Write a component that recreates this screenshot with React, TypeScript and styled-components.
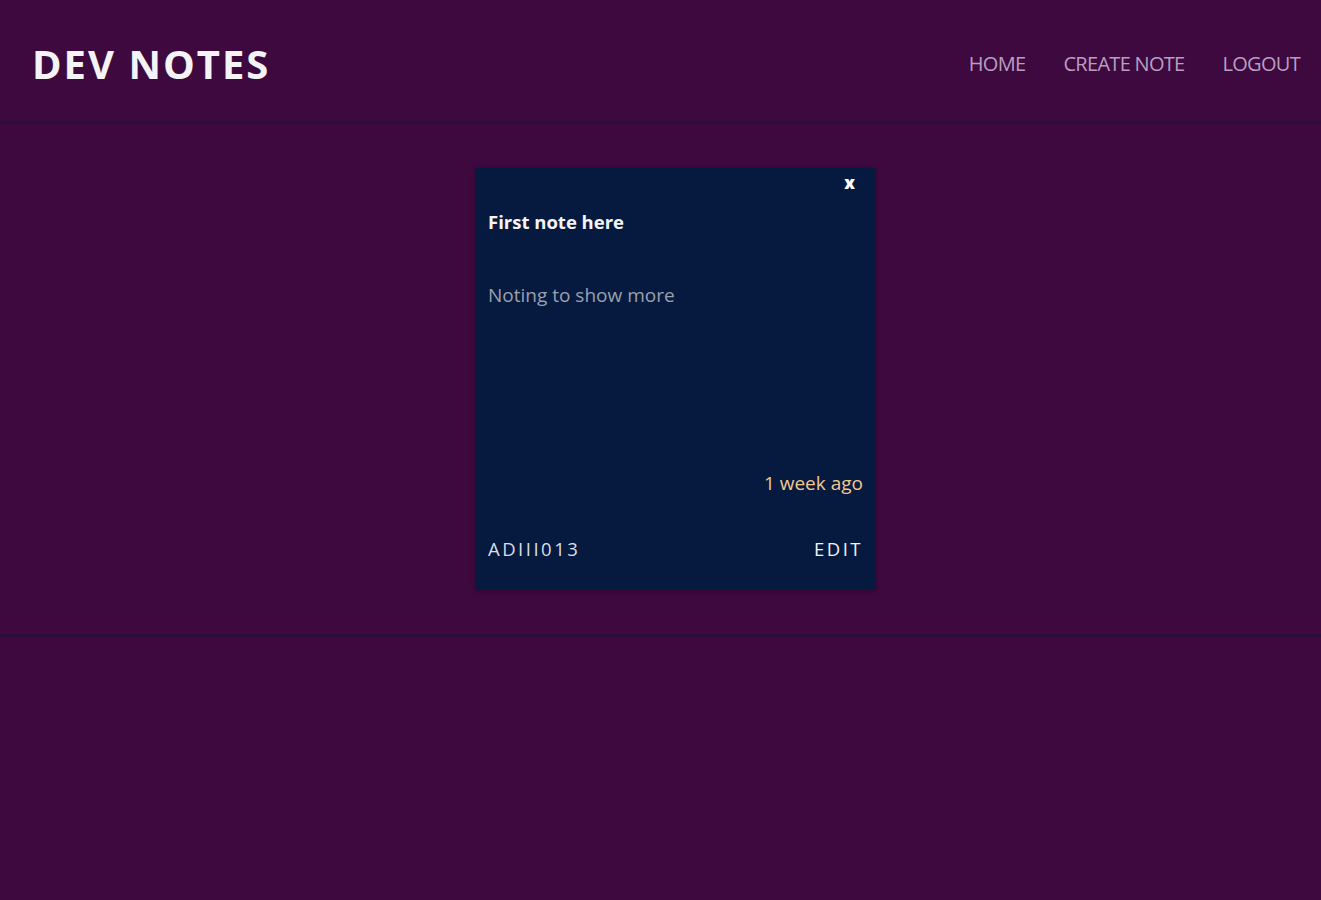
import styled, { createGlobalStyle } from "styled-components";

const COLORS = {
  page: "#3e093e",
  line: "#2b0f3b",
  card: "#061a40",
  nav: "#b99ec0",
  title: "#f4f4f6",
  muted: "#9aa0ae",
  time: "#f1c98e",
  footer: "#dcdde3",
};

type NoteType = {
  title: string;
  body: string;
  time: string;
  author: string;
};

const notes: NoteType[] = [
  {
    title: "First note here",
    body: "Noting to show more",
    time: "1 week ago",
    author: "ADIII013",
  },
];

const GlobalStyle = createGlobalStyle`
  html, body {
    margin: 0;
    background: ${COLORS.page};
    font-family: "Open Sans", "Noto Sans", sans-serif;
  }
  * {
    box-sizing: border-box;
  }
`;

const App = () => {
  return (
    <>
      <GlobalStyle />
      <Page>
        <Header>
          <Logo>DEV NOTES</Logo>
          <Nav>
            <NavLink href="#">HOME</NavLink>
            <NavLink href="#">CREATE NOTE</NavLink>
            <NavLink href="#">LOGOUT</NavLink>
          </Nav>
        </Header>
        <Main>
          {notes.map((note, index) => (
            <Card key={index}>
              <CloseButton>x</CloseButton>
              <NoteTitle>{note.title}</NoteTitle>
              <NoteBody>{note.body}</NoteBody>
              <Time>{note.time}</Time>
              <CardFooter>
                <Author>{note.author}</Author>
                <EditLink href="#">EDIT</EditLink>
              </CardFooter>
            </Card>
          ))}
        </Main>
      </Page>
    </>
  );
};

const Page = styled.div`
  min-height: 900px;
  background: ${COLORS.page};
`;

const Header = styled.header`
  height: 124px;
  display: flex;
  align-items: center;
  justify-content: space-between;
  padding: 6px 21px 0 32px;
  border-bottom: 3px solid ${COLORS.line};
`;

const Logo = styled.h1`
  margin: 0;
  color: ${COLORS.title};
  font-size: 40px;
  font-weight: 700;
  letter-spacing: 2px;
`;

const Nav = styled.nav`
  display: flex;
  gap: 38px;
`;

const NavLink = styled.a`
  color: ${COLORS.nav};
  text-decoration: none;
  font-size: 20px;
  letter-spacing: -0.7px;
`;

const Main = styled.main`
  display: flex;
  justify-content: center;
  padding: 44px 0 44px 30px;
  border-bottom: 3px solid ${COLORS.line};
`;

const Card = styled.div`
  position: relative;
  width: 401px;
  height: 422px;
  background: ${COLORS.card};
  box-shadow: 0 1px 4px rgba(0, 0, 0, 0.3);
  padding: 40px 13px 0 13px;
  display: flex;
  flex-direction: column;
`;

const CloseButton = styled.span`
  position: absolute;
  top: 3px;
  right: 21px;
  color: #ffffff;
  font-size: 17px;
  font-weight: 800;
  cursor: pointer;
`;

const NoteTitle = styled.h3`
  margin: 0;
  color: ${COLORS.title};
  font-size: 18.5px;
  font-weight: 700;
  line-height: 28px;
`;

const NoteBody = styled.p`
  margin: 45px 0 0;
  color: ${COLORS.muted};
  font-size: 19px;
  line-height: 28px;
  flex: 1;
`;

const Time = styled.span`
  align-self: flex-end;
  color: ${COLORS.time};
  font-size: 19px;
  line-height: 28px;
`;

const CardFooter = styled.div`
  display: flex;
  justify-content: space-between;
  align-items: center;
  margin-top: 36px;
  height: 57px;
  padding-bottom: 27px;
`;

const Author = styled.span`
  color: ${COLORS.footer};
  font-size: 18.5px;
  letter-spacing: 2.5px;
`;

const EditLink = styled.a`
  color: #f2f2f5;
  font-size: 18.5px;
  letter-spacing: 2.5px;
  text-decoration: none;
`;

export default App;
